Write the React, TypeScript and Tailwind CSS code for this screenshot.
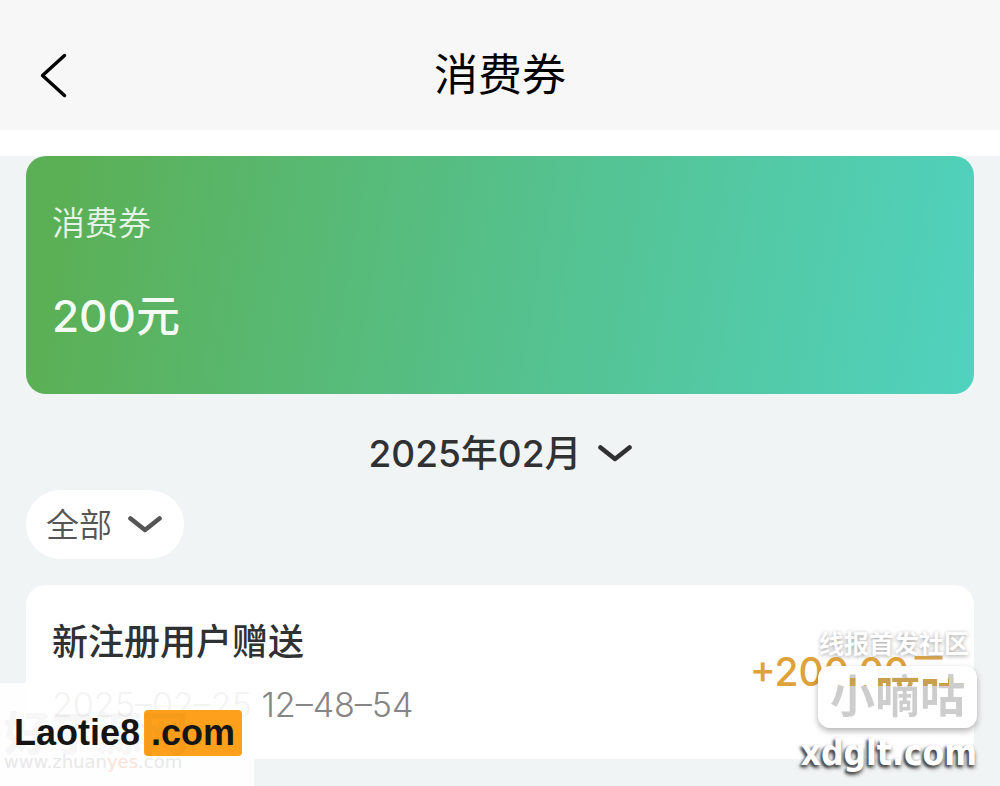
import React, { useState } from 'react'

interface CouponRecord {
  title: string
  time: string
  amount: string
}

const records: CouponRecord[] = [
  { title: '新注册用户赠送', time: '2025–02–25 12–48–54', amount: '+200.00元' },
]

const months = ['2025年02月', '2025年01月', '2024年12月']
const types = ['全部', '收入', '支出']

function Chevron({ className }: { className: string }) {
  return (
    <svg viewBox="0 0 34 18" className={className} aria-hidden="true">
      <path
        d="M2.5 2.5 L17 14 L31.5 2.5"
        fill="none"
        stroke="currentColor"
        strokeWidth="4.6"
        strokeLinecap="round"
        strokeLinejoin="round"
      />
    </svg>
  )
}

interface PickerProps {
  label: string
  value: string
  options: string[]
  onChange: (value: string) => void
  className: string
}

function Picker({ label, value, options, onChange, className }: PickerProps) {
  return (
    <label className={`inline-flex items-center gap-4 ${className}`}>
      <span className="sr-only">{label}</span>
      <select
        value={value}
        onChange={(e) => onChange(e.target.value)}
        className="field-sizing-content cursor-pointer appearance-none bg-transparent outline-none"
      >
        {options.map((option) => (
          <option key={option}>{option}</option>
        ))}
      </select>
      <Chevron className="pointer-events-none h-[18px] w-[34px] shrink-0" />
    </label>
  )
}

function Header() {
  return (
    <header className="grid h-[130px] grid-cols-[1fr_auto_1fr] items-center bg-[#f7f7f7] px-9 pt-5">
      <button type="button" aria-label="返回" className="w-9">
        <svg viewBox="0 0 36 48" className="h-12 w-9" aria-hidden="true">
          <path
            d="M28.5 4.5 L6.5 24.5 L28.5 44.5"
            fill="none"
            stroke="#000"
            strokeWidth="3.4"
            strokeLinecap="round"
            strokeLinejoin="round"
          />
        </svg>
      </button>
      <h1 className="text-[44px] leading-[52px] text-black">消费券</h1>
    </header>
  )
}

function BalanceCard() {
  return (
    <section className="rounded-[20px] bg-linear-[100deg] from-[#5bb056] from-5% via-[#55c08a] via-50% to-[#50d2bf] px-[26px] pt-11 pb-12 text-white">
      <h2 className="text-[33px] leading-[46px] font-[350] text-white/85">消费券</h2>
      <p className="mt-10 text-[44px] leading-[60px] font-medium text-white/95">200元</p>
    </section>
  )
}

function RecordCard({ record }: { record: CouponRecord }) {
  return (
    <li className="flex items-center justify-between rounded-[20px] bg-white px-[26px] py-8">
      <div>
        <h3 className="text-[36px] leading-[50px] font-medium text-[#303133]">{record.title}</h3>
        <time className="mt-4 block text-[34px] leading-[44px] font-light text-[#858585]">
          {record.time}
        </time>
      </div>
      <p className="text-[39px] leading-[50px] font-medium text-[#dfa23a]">{record.amount}</p>
    </li>
  )
}

function SiteBadge() {
  return (
    <div className="pointer-events-none absolute bottom-0 left-0 h-[103px] w-[254px] bg-white/90">
      <div className="absolute top-[27px] left-[14px] flex items-center gap-1 font-['Liberation_Sans',sans-serif] text-[36px] leading-[46px] font-bold text-[#151515]">
        <span>Laotie8</span>
        <span className="rounded bg-[#ffa01c] px-[7px]">.com</span>
      </div>
      {/* Faint stamp lies over the logo */}
      <div className="absolute top-5 left-1 text-[46px] leading-[60px] font-black text-black/5">
        好了源网
      </div>
      <div className="absolute top-[70px] left-1 font-['DejaVu_Sans',sans-serif] text-[18px] leading-[18px] text-[#e8e8e8]">
        www.zhuan<span className="text-[#fae3d6]">yes</span>.com
      </div>
    </div>
  )
}

function CommunityBadge() {
  return (
    <div className="pointer-events-none absolute right-[23px] bottom-2 flex flex-col items-end">
      <div className="mr-2 text-[25px] leading-[36px] font-bold text-white [text-shadow:0_1px_4px_#a0a0a0]">
        线报首发社区
      </div>
      <div className="mt-1 rounded-xl bg-white px-3 text-[45px] leading-[62px] font-bold shadow-[0_3px_6px_#0000004d]">
        <span className="block bg-[linear-gradient(to_right,transparent_88%,#cdcdcd_88%),linear-gradient(#cdcdcd_20%,#c9a04c_20%,#c9a04c_32%,#cdcdcd_32%)] bg-clip-text text-transparent">
          小嘀咕
        </span>
      </div>
      <div className="font-['DejaVu_Sans_Condensed','DejaVu_Sans',sans-serif] text-[35px] leading-[50px] font-bold text-white [text-shadow:-2px_2px_3px_#444,0_3px_4px_#777]">
        xdglt.com
      </div>
    </div>
  )
}

export default function App() {
  const [month, setMonth] = useState(months[0])
  const [type, setType] = useState(types[0])

  return (
    <div className="relative flex min-h-screen flex-col overflow-hidden bg-white font-['Inter','Noto_Sans_CJK_SC',sans-serif]">
      <Header />
      <main className="mt-[26px] flex-1 bg-[#f1f4f5] px-[26px]">
        <BalanceCard />
        <div className="mt-[34px] flex justify-center">
          <Picker
            label="月份"
            value={month}
            options={months}
            onChange={setMonth}
            className="text-[37px] leading-[52px] font-medium text-[#303133]"
          />
        </div>
        <Picker
          label="类型"
          value={type}
          options={types}
          onChange={setType}
          className="mt-[10px] h-[69px] rounded-full bg-white pr-[22px] pl-5 text-[33px] leading-[46px] font-[350] text-[#555]"
        />
        <ul className="mt-[26px]">
          {records.map((record) => (
            <RecordCard key={record.time} record={record} />
          ))}
        </ul>
      </main>
      <SiteBadge />
      <CommunityBadge />
    </div>
  )
}
